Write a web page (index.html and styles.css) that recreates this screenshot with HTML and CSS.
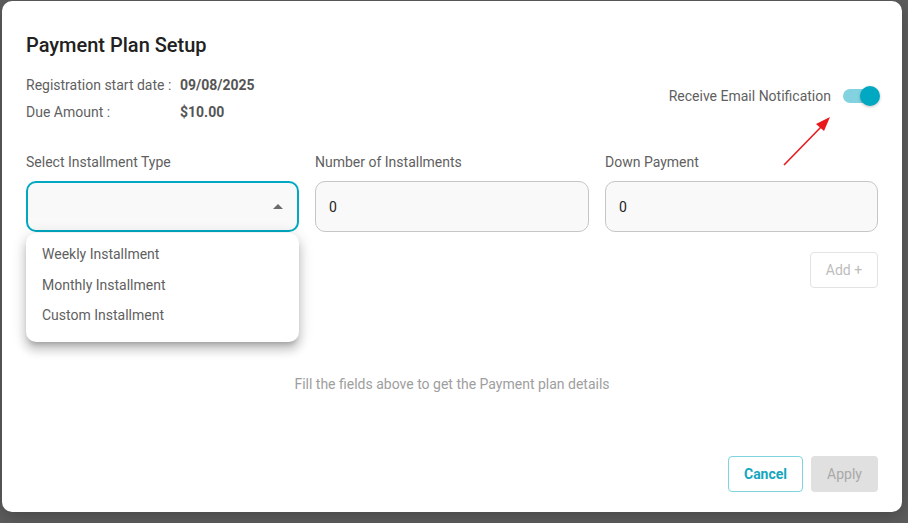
FILE: index.html
```html
<!DOCTYPE html>
<html>
<head>
<meta charset="utf-8">
<link rel="stylesheet" href="styles.css">
</head>
<body>
<div class="backdrop">
  <div class="dialog">
    <h1 class="title">Payment Plan Setup</h1>
    <div class="head-row">
      <div class="info">
        <div class="info-row"><span class="info-label">Registration start date :</span><span class="info-value">09/08/2025</span></div>
        <div class="info-row"><span class="info-label">Due Amount :</span><span class="info-value">$10.00</span></div>
      </div>
      <div class="notify">
        <span class="notify-label">Receive Email Notification</span>
        <span class="switch"><span class="switch-track"></span><span class="switch-thumb"></span></span>
      </div>
    </div>

    <div class="fields">
      <div class="field">
        <label class="field-label">Select Installment Type</label>
        <div class="select-wrap">
          <div class="input select"><span class="caret"></span></div>
          <ul class="menu">
            <li>Weekly Installment</li>
            <li>Monthly Installment</li>
            <li>Custom Installment</li>
          </ul>
        </div>
      </div>
      <div class="field">
        <label class="field-label">Number of Installments</label>
        <div class="input">0</div>
      </div>
      <div class="field">
        <label class="field-label">Down Payment</label>
        <div class="input">0</div>
      </div>
    </div>

    <div class="add-row"><button class="btn btn-add">Add +</button></div>

    <p class="empty">Fill the fields above to get the Payment plan details</p>

    <div class="footer">
      <button class="btn btn-cancel">Cancel</button>
      <button class="btn btn-apply">Apply</button>
    </div>

    <svg class="arrow" width="60" height="60" viewBox="0 0 60 60">
      <line x1="5" y1="54" x2="43" y2="15" stroke="#e8191c" stroke-width="1.6"/>
      <polygon points="51,6 37,13 45,20" fill="#e8191c"/>
    </svg>
  </div>
</div>
</body>
</html>
```

FILE: styles.css
```css
* { box-sizing: border-box; }
html, body { margin: 0; padding: 0; }
body {
  font-family: Roboto, "Noto Sans", "Liberation Sans", sans-serif;
  background: #5d5d5d;
}
.backdrop {
  width: 908px;
  height: 523px;
  padding: 1px 0 0 2px;
  background: #5d5d5d;
  overflow: hidden;
}
.dialog {
  position: relative;
  width: 900px;
  height: 511px;
  background: #fff;
  border-radius: 10px;
  padding: 30px 24px 20px 24px;
  display: flex;
  flex-direction: column;
  box-shadow: 0 4px 18px rgba(0,0,0,0.25);
}
.title {
  margin: 0;
  font-size: 20px;
  line-height: 28px;
  font-weight: 500;
  color: #212121;
}
.head-row {
  margin-top: 16px;
  display: flex;
  justify-content: space-between;
  align-items: center;
}
.info { display: flex; flex-direction: column; gap: 7px; }
.info-row { display: flex; font-size: 14px; line-height: 20px; color: #5f5f5f; }
.info-label { width: 154px; }
.info-value { font-weight: 700; color: #555; }
.notify {
  display: flex;
  align-items: center;
  gap: 12px;
  margin-bottom: 5px;
  margin-right: -2px;
}
.notify-label { font-size: 14px; line-height: 20px; color: #5f5f5f; }
.switch {
  position: relative;
  width: 37px;
  height: 20px;
  display: inline-block;
}
.switch-track {
  position: absolute;
  left: 0; top: 3px;
  width: 34px; height: 14px;
  border-radius: 7px;
  background: #82d3df;
}
.switch-thumb {
  position: absolute;
  right: 0; top: 0;
  width: 20px; height: 20px;
  border-radius: 50%;
  background: #00a8c1;
  box-shadow: 0 1px 3px rgba(0,0,0,0.25);
}
.fields {
  margin-top: 30px;
  display: grid;
  grid-template-columns: 273px 274px 273px;
  column-gap: 16px;
}
.field { display: flex; flex-direction: column; }
.field-label {
  font-size: 14px;
  line-height: 20px;
  color: #5f5f5f;
  margin-bottom: 9px;
}
.select-wrap { position: relative; }
.input {
  height: 51px;
  border: 1px solid #c6c6c6;
  border-radius: 10px;
  background: #f9f9f9;
  font-size: 14px;
  color: #222;
  display: flex;
  align-items: center;
  padding: 0 13px;
}
.select {
  border: 2px solid #00a8c1;
  justify-content: flex-end;
  padding-right: 14px;
}
.caret {
  width: 0; height: 0;
  border-left: 5px solid transparent;
  border-right: 5px solid transparent;
  border-bottom: 5px solid #6b6b6b;
  margin-top: -1px;
}
.menu {
  position: absolute;
  left: 0;
  top: 52px;
  width: 273px;
  margin: 0;
  padding: 6px 0 11px;
  list-style: none;
  background: #fff;
  border-radius: 10px;
  box-shadow: 0 5px 5px -3px rgba(0,0,0,0.2), 0 8px 10px 1px rgba(0,0,0,0.14), 0 3px 14px 2px rgba(0,0,0,0.12);
  z-index: 2;
}
.menu li {
  font-size: 14px;
  line-height: 30.5px;
  padding: 0 16px;
  color: #5f5f5f;
}
.add-row { display: flex; justify-content: flex-end; margin-top: 20px; }
.btn {
  font-family: inherit;
  font-size: 14px;
  height: 36px;
  border-radius: 4px;
  padding: 0;
  background: #fff;
  cursor: pointer;
}
.btn-add {
  width: 68px;
  border: 1px solid #e3e3e3;
  color: #bdbdbd;
}
.empty {
  margin: 86px 0 0;
  text-align: center;
  font-size: 14px;
  line-height: 20px;
  color: #9e9e9e;
}
.footer {
  margin-top: auto;
  display: flex;
  justify-content: flex-end;
  gap: 8px;
}
.btn-cancel {
  width: 75px;
  border: 1px solid #7ed3de;
  color: #14a6be;
  font-weight: 700;
}
.btn-apply {
  width: 67px;
  border: none;
  background: #e0e0e0;
  color: #a9a9a9;
}
.arrow {
  position: absolute;
  left: 777px;
  top: 110px;
}
```
